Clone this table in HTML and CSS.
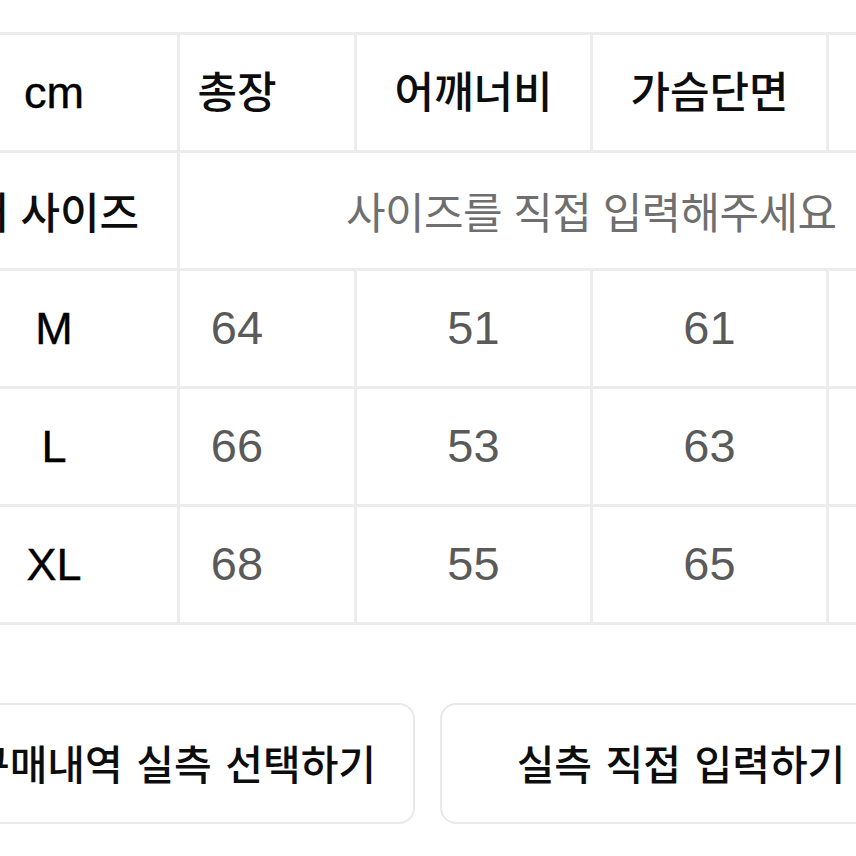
FILE: index.html
```html
<!DOCTYPE html>
<html lang="ko">
<head>
<meta charset="utf-8">
<title>사이즈</title>
<link rel="stylesheet" href="styles.css">
</head>
<body>
<div class="page">
  <div class="size-table">
    <div class="cell label latin">cm</div>
    <div class="cell head first">총장</div>
    <div class="cell head">어깨너비</div>
    <div class="cell head">가슴단면</div>
    <div class="cell head"></div>

    <div class="cell label">내 사이즈</div>
    <div class="cell placeholder">사이즈를 직접 입력해주세요</div>

    <div class="cell label latin">M</div>
    <div class="cell num first">64</div>
    <div class="cell num">51</div>
    <div class="cell num">61</div>
    <div class="cell num"></div>

    <div class="cell label latin">L</div>
    <div class="cell num first">66</div>
    <div class="cell num">53</div>
    <div class="cell num">63</div>
    <div class="cell num"></div>

    <div class="cell label latin">XL</div>
    <div class="cell num first">68</div>
    <div class="cell num">55</div>
    <div class="cell num">65</div>
    <div class="cell num"></div>
  </div>

  <div class="actions">
    <button class="btn">구매내역 실측 선택하기</button>
    <button class="btn">실측 직접 입력하기</button>
  </div>
</div>
</body>
</html>
```

FILE: styles.css
```css
html, body {
  margin: 0;
  padding: 0;
  background: #ffffff;
  overflow: hidden;
}

body {
  width: 856px;
  height: 856px;
  font-family: "Noto Sans CJK KR", "Liberation Sans", sans-serif;
}

.page {
  padding-top: 32px;
}

.size-table {
  display: grid;
  grid-template-columns: 249px 174px 233px 233px 233px;
  grid-auto-rows: 115px;
  gap: 3px;
  background: #ececec;
  border-top: 3px solid #ececec;
  border-bottom: 3px solid #ececec;
  margin-left: -72px;
  width: max-content;
}

.cell {
  background: #ffffff;
  display: flex;
  align-items: center;
  justify-content: center;
  color: #0d0d0d;
  font-size: 43px;
  font-weight: 500;
  white-space: nowrap;
}

.head {
  padding-bottom: 8px;
}

.head.first,
.num.first {
  padding-right: 60px;
}

.latin {
  font-family: "Liberation Sans", Arial, sans-serif;
  font-size: 45px;
  font-weight: 400;
  color: #000000;
  padding-top: 2px;
  -webkit-text-stroke: 0.4px #000000;
}

.label {
  padding-left: 3px;
  padding-bottom: 2px;
}

.num {
  font-family: "Liberation Sans", Arial, sans-serif;
  font-size: 47px;
  font-weight: 400;
  color: #5a5a5a;
  padding-bottom: 2px;
}

.placeholder {
  grid-column: 2 / span 4;
  justify-content: flex-start;
  padding-left: 166px;
  padding-bottom: 2px;
  color: #6f6f6f;
  font-weight: 400;
  letter-spacing: -0.6px;
}

.actions {
  display: flex;
  gap: 25px;
  margin-left: -67px;
  margin-top: 78px;
}

.btn {
  flex: 0 0 482px;
  height: 121px;
  background: #ffffff;
  border: 2px solid #e9e9e9;
  border-radius: 16px;
  font-family: "Noto Sans CJK KR", sans-serif;
  font-size: 41px;
  font-weight: 500;
  color: #0d0d0d;
  word-spacing: 2px;
  padding: 0 0 4px 0;
}
```
